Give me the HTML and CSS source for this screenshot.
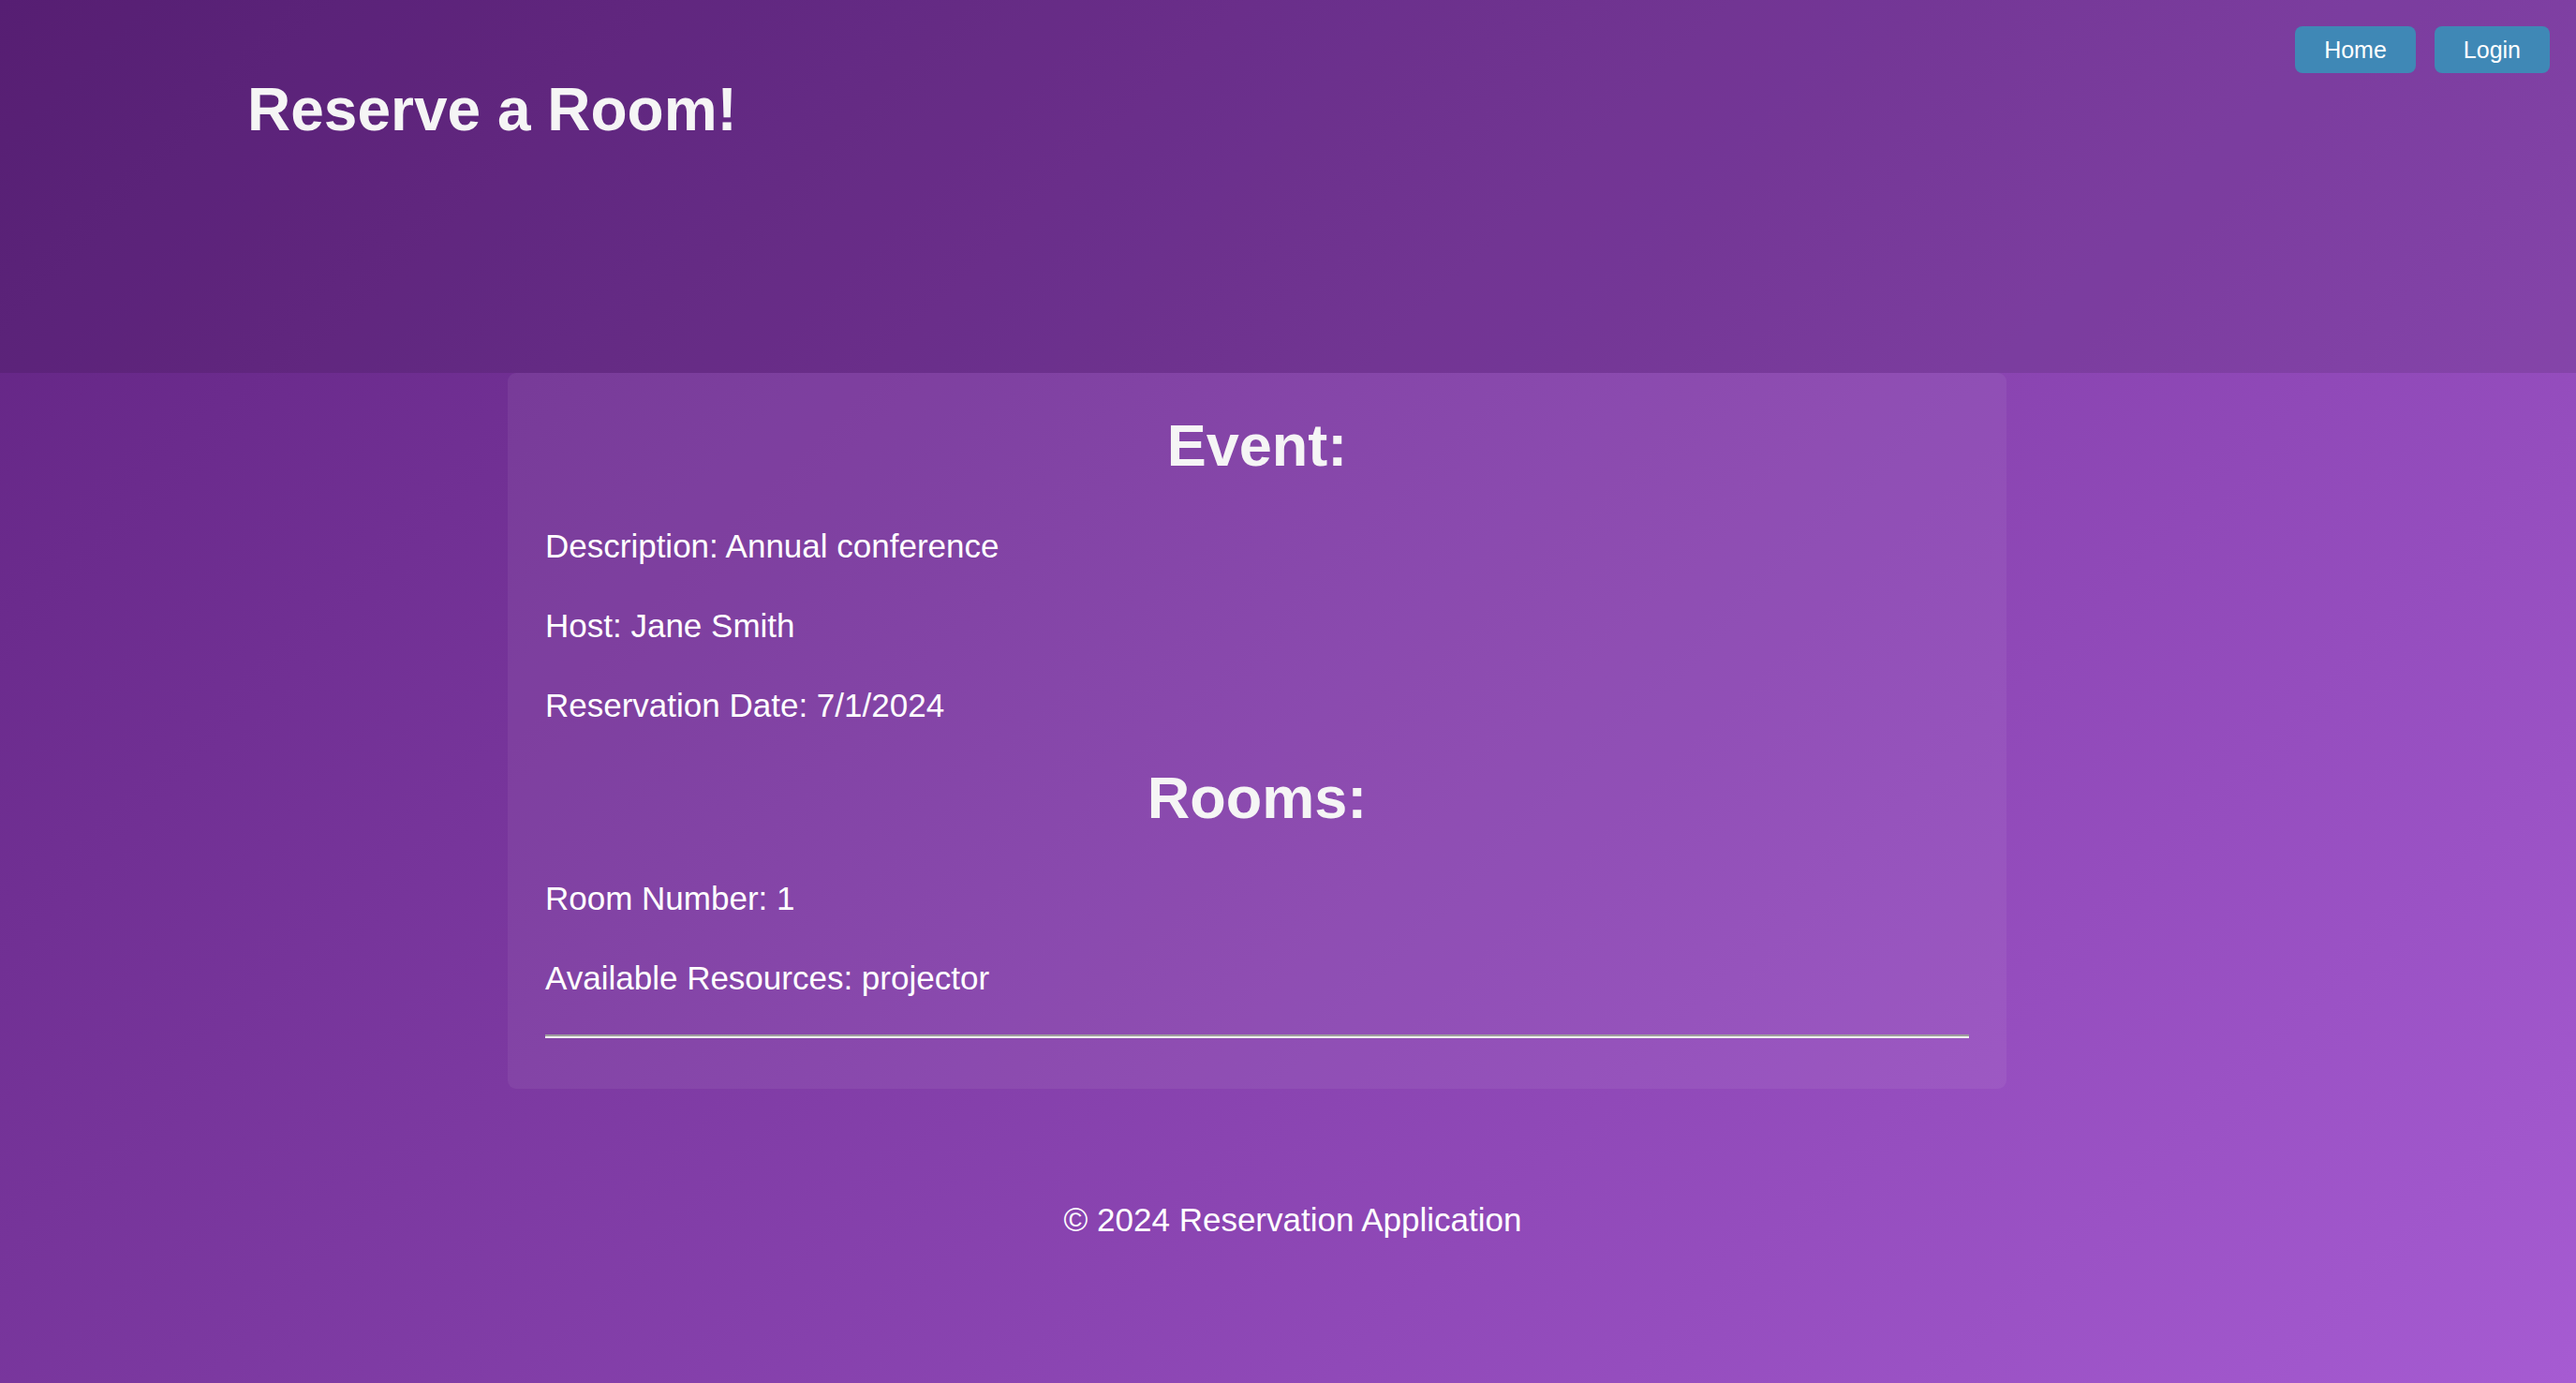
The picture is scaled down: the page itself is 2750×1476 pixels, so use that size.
FILE: index.html
```html
<!DOCTYPE html>
<html lang="en">
<head>
<meta charset="utf-8">
<title>Reserve a Room!</title>
<link rel="stylesheet" href="styles.css">
</head>
<body>
  <header class="site-header">
    <h1 class="site-title">Reserve a Room!</h1>
    <nav class="site-nav">
      <a class="nav-btn" href="#">Home</a>
      <a class="nav-btn" href="#">Login</a>
    </nav>
  </header>
  <main class="card">
    <h2 class="card-heading">Event:</h2>
    <p class="card-line">Description: Annual conference</p>
    <p class="card-line">Host: Jane Smith</p>
    <p class="card-line">Reservation Date: 7/1/2024</p>
    <h2 class="card-heading">Rooms:</h2>
    <p class="card-line">Room Number: 1</p>
    <p class="card-line">Available Resources: projector</p>
    <hr class="card-rule">
  </main>
  <footer class="site-footer">
    <p class="footer-text">© 2024 Reservation Application</p>
  </footer>
</body>
</html>
```

FILE: styles.css
```css
html {
  height: 100%;
}

body {
  margin: 0;
  min-height: 100%;
  font-family: "Liberation Sans", Arial, Helvetica, sans-serif;
  color: #ffffff;
  background: linear-gradient(135deg, #602280 0%, #a65bd2 100%);
}

.site-header {
  box-sizing: border-box;
  height: 398px;
  padding: 28px 28px 0 264px;
  display: flex;
  justify-content: space-between;
  align-items: flex-start;
  background: rgba(0, 0, 0, 0.1);
}

.site-title {
  margin: 53px 0 0;
  font-size: 64px;
  font-weight: 700;
  line-height: 72px;
  color: #f5f5f5;
}

.site-nav {
  display: flex;
  gap: 20px;
}

.nav-btn {
  display: block;
  height: 50px;
  line-height: 50px;
  padding: 0 31px;
  border-radius: 8px;
  background: #3f88b6;
  color: #ffffff;
  font-size: 25px;
  text-decoration: none;
}

.card {
  display: flow-root;
  box-sizing: border-box;
  width: 1600px;
  margin: 0 0 0 542px;
  padding: 0 40px;
  border-radius: 9px;
  background: rgba(255, 255, 255, 0.06);
}

.card-heading {
  margin: 38px 0 48px;
  text-align: center;
  font-size: 63px;
  font-weight: 700;
  line-height: 70px;
  color: #f5f5f5;
}

.card-heading:first-child {
  margin-top: 42px;
}

.card-line {
  margin: 35px 0;
  font-size: 35px;
  line-height: 50px;
}

.card-rule {
  height: 0;
  margin: 35px 0 54px;
  border: 0;
  border-top: 2px solid #9c9c9c;
  border-bottom: 2px solid #f0f0f0;
}

.site-footer {
  padding: 115px 0 60px 10px;
  text-align: center;
}

.footer-text {
  margin: 0;
  font-size: 35px;
  line-height: 50px;
}
```
